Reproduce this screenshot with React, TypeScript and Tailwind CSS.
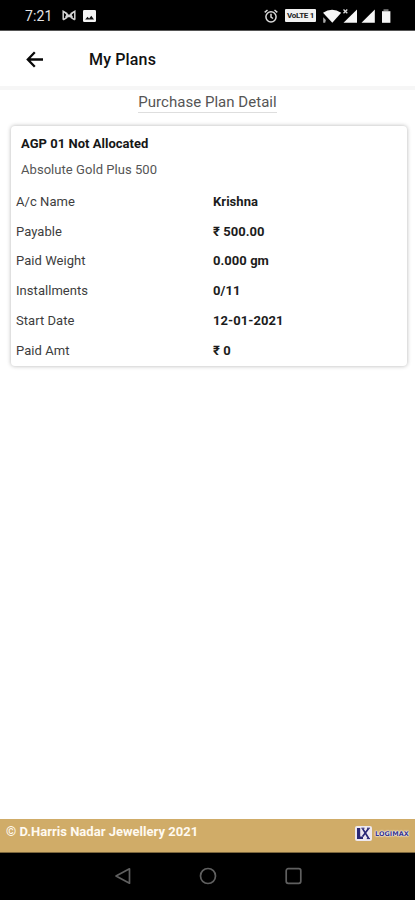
const details = [
  { label: 'A/c Name', value: 'Krishna' },
  { label: 'Payable', value: '₹ 500.00' },
  { label: 'Paid Weight', value: '0.000 gm' },
  { label: 'Installments', value: '0/11' },
  { label: 'Start Date', value: '12-01-2021' },
  { label: 'Paid Amt', value: '₹ 0' },
];

function StatusBar() {
  return (
    <div className="flex h-[31px] shrink-0 items-center border-b border-[#555] bg-black pt-px pr-[24px] pl-[25px] text-[#e4e4e4]">
      <span className="w-[27px] text-[14px] leading-none tracking-[0.1px] whitespace-nowrap">7:21</span>
      <svg className="ml-[10px]" width="14" height="11" viewBox="0 0 14 11" fill="none" stroke="#d4d4d4" strokeWidth="1.5">
        <path d="M1.2 9.8V1.3L4.8 3.5v4L1.2 9.8M12.8 9.8V1.3L9.2 3.5v4l3.6 2.3M3 2.6l4 3.2 4-3.2M3.3 6.5h7.4" />
      </svg>
      <svg className="ml-[7px]" width="13" height="12" viewBox="0 0 13 12">
        <rect width="13" height="12" rx="1.3" fill="#f4f4f4" />
        <path d="M2.2 9.6 4.5 6.8 6.1 8.5 8.3 5.8 11 9.6z" fill="#111" />
      </svg>

      <svg className="ml-auto" width="14" height="14" viewBox="0 0 14 14" fill="none" stroke="#dadada" strokeWidth="1.5">
        <circle cx="7" cy="7.8" r="5.1" />
        <path d="M7 4.8v3.3l2 1.4M.7 3.4 3.5 1M13.3 3.4 10.5 1" />
      </svg>
      <span className="ml-[7px] flex h-[13px] w-[31px] items-center justify-center rounded-[1px] bg-[#f1f1f1] text-[8px] leading-none font-bold tracking-[-0.3px] whitespace-nowrap text-[#222]">
        VoLTE 1
      </span>
      <svg className="ml-[6px]" width="69" height="16" viewBox="0 0 69 16" fill="#f6f6f6">
        <path d="M1 4.8Q10 -1.3 19.2 4.8L10.3 14.8z" />
        <path d="M1.2 9.2 3.9 12 3.2 14.8H1.2z" fill="#aaa" />
        <path d="M35 1.5V14.8H21.5z" />
        <path d="M52.8 1.5V14.8H39.5z" />
        <path d="M61.5 1.2h5v2h-5z" fill="#777" />
        <path d="M60 3.2h8.4V14.8H60z" />
        <path d="m21.5 1.5 3.8 3.8m0-3.8-3.8 3.8" stroke="#ddd" strokeWidth="1.3" />
      </svg>
    </div>
  );
}

function Toolbar() {
  return (
    <header className="flex h-[55px] shrink-0 items-center bg-white pl-[26px]">
      <svg className="mt-px" width="18" height="17" viewBox="0 0 18 17" fill="none" stroke="#080808" strokeWidth="2.3">
        <path d="M17 8.5H2.2M8.8 1.3 1.8 8.5l7 7.2" />
      </svg>
      <h1 className="ml-[45px] pt-[2px] text-[16px] leading-5 font-medium tracking-[0.15px] text-[#111]">My Plans</h1>
    </header>
  );
}

function PlanCard() {
  return (
    <section className="mt-[13px] mr-[8px] ml-[11px] h-[240px] rounded-[4px] bg-white pt-[9px] pl-[6px] shadow-[0_0_4px_rgba(0,0,0,0.3)]">
      <h3 className="pl-[4px] text-[13px] leading-[18px] font-bold tracking-[0.03px] text-[#161616]">AGP 01 Not Allocated</h3>
      <p className="mt-[8px] pl-[4px] text-[13px] leading-[18px] tracking-[0.05px] text-[#555]">Absolute Gold Plus 500</p>
      <dl className="mt-[8px] -ml-px">
        {details.map((item) => (
          <div key={item.label} className="flex h-[29.75px] items-center text-[13px] leading-[18px] tracking-[0.05px]">
            <dt className="w-[197px] text-[#3d3d3d]">{item.label}</dt>
            <dd className="font-bold text-[#1c1c1c]">{item.value}</dd>
          </div>
        ))}
      </dl>
    </section>
  );
}

function Footer() {
  return (
    <footer className="flex h-[34px] shrink-0 items-center justify-between border-b border-[#7b663d] bg-[#d0ac68] pr-[4px] pl-[6px]">
      <span className="pb-[7px] text-[13px] leading-[18px] font-bold tracking-[0.02px] text-[#fffaf0]">
        © D.Harris Nadar Jewellery 2021
      </span>
      <div className="flex items-center gap-[3px] pb-[4px]">
        <svg width="17" height="15" viewBox="0 0 17 15">
          <rect width="17" height="15" rx="2" fill="#eee9ef" />
          <path d="M2 2h3.2v8.6H8V13H2z" fill="#292775" />
          <path d="m7.6 2.6 6 9.6M13.6 2.6l-6 8" stroke="#292775" strokeWidth="1.7" fill="none" />
          <path d="M6.3 2.2h3.2M12 2.2h3M11.8 12.6H15" stroke="#292775" strokeWidth="1" />
        </svg>
        <span className="w-[36px] font-['DejaVu_Sans',sans-serif] text-[6.5px] leading-[8px] font-bold whitespace-nowrap text-[#39358b] [text-shadow:0_0_1px_#fff,0_0_2px_#fff,0_0_2px_#fff]">
          LOGIMAX
        </span>
      </div>
    </footer>
  );
}

function NavBar() {
  return (
    <nav className="flex h-[47px] shrink-0 items-center justify-center gap-[68px] bg-black pb-px">
      <svg width="17" height="18" viewBox="0 0 17 18" fill="none" stroke="#606060" strokeWidth="1.7" strokeLinejoin="round">
        <path d="M15.5 1.8v14.4L2 9z" />
      </svg>
      <svg width="18" height="18" viewBox="0 0 18 18" fill="none" stroke="#606060" strokeWidth="1.7">
        <circle cx="9" cy="9" r="7.5" />
      </svg>
      <svg width="17" height="18" viewBox="0 0 17 18" fill="none" stroke="#606060" strokeWidth="1.7">
        <rect x="1.2" y="1.7" width="14.6" height="14.6" rx="2" />
      </svg>
    </nav>
  );
}

export default function App() {
  return (
    <div className="flex h-[900px] w-[415px] flex-col overflow-hidden bg-white font-['Roboto',sans-serif]">
      <StatusBar />
      <Toolbar />
      <main className="flex-1 border-t-4 border-[#f6f6f6]">
        <div className="flex justify-center">
          <h2 className="h-[23px] border-b border-[#dedede] pt-[2px] text-[15px] leading-5 tracking-[0.03px] whitespace-nowrap text-[#555]">
            Purchase Plan Detail
          </h2>
        </div>
        <PlanCard />
      </main>
      <Footer />
      <NavBar />
    </div>
  );
}
